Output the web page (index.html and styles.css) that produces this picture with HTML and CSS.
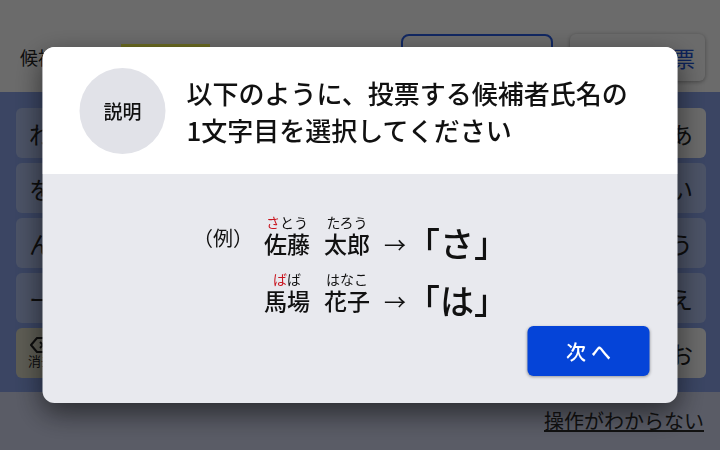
FILE: index.html
```html
<!DOCTYPE html>
<html lang="ja">

<head>
    <meta charset="UTF-8">
    <meta name="viewport" content="width=device-width, initial-scale=1.0">
    <title>候補者選択</title>
    <link rel="stylesheet" href="styles.css">
</head>

<body>

    <div class="app">
        <!-- 上部バー -->
        <header class="topbar">
            <span class="topbar-label">候補者</span>
            <div class="name-box"></div>
            <div class="search-box"></div>
            <button class="blank-btn">白票</button>
        </header>

        <!-- 50音キーボード -->
        <div class="keyboard">
            <button class="key">わ</button>
            <button class="key">を</button>
            <button class="key">ん</button>
            <button class="key">ー</button>
            <button class="key key-delete">
                <svg width="22" height="16" viewBox="0 0 22 16">
                    <path d="M7 1h13v14H7L1 8z" fill="none" stroke="#222" stroke-width="2" stroke-linejoin="round"/>
                    <path d="M10 5l6 6M16 5l-6 6" stroke="#222" stroke-width="2"/>
                </svg>
                <span>消去</span>
            </button>

            <button class="key">ら</button>
            <button class="key">り</button>
            <button class="key">る</button>
            <button class="key">れ</button>
            <button class="key">ろ</button>

            <button class="key">や</button>
            <button class="key">（</button>
            <button class="key">ゆ</button>
            <button class="key">）</button>
            <button class="key">よ</button>

            <button class="key">ま</button>
            <button class="key">み</button>
            <button class="key">む</button>
            <button class="key">め</button>
            <button class="key">も</button>

            <button class="key">は</button>
            <button class="key">ひ</button>
            <button class="key">ふ</button>
            <button class="key">へ</button>
            <button class="key">ほ</button>

            <button class="key">な</button>
            <button class="key">に</button>
            <button class="key">ぬ</button>
            <button class="key">ね</button>
            <button class="key">の</button>

            <button class="key">た</button>
            <button class="key">ち</button>
            <button class="key">つ</button>
            <button class="key">て</button>
            <button class="key">と</button>

            <button class="key">さ</button>
            <button class="key">し</button>
            <button class="key">す</button>
            <button class="key">せ</button>
            <button class="key">そ</button>

            <button class="key">か</button>
            <button class="key">き</button>
            <button class="key">く</button>
            <button class="key">け</button>
            <button class="key">こ</button>

            <button class="key key-on">あ</button>
            <button class="key">い</button>
            <button class="key">う</button>
            <button class="key">え</button>
            <button class="key key-on">お</button>
        </div>

        <footer class="help">
            <a href="#" class="help-link">操作がわからない</a>
        </footer>
    </div>

    <!-- 説明ダイアログ -->
    <div class="overlay"></div>
    <div class="modal">
        <div class="modal-head">
            <div class="badge">説明</div>
            <h2 class="modal-title">以下のように、投票する候補者氏名の<br>1文字目を選択してください</h2>
        </div>

        <div class="modal-body">
            <div class="example">
                <span class="example-label">（例）</span>
                <span class="name"><span class="kana"><em>さ</em>とう</span><span class="kanji">佐藤</span></span>
                <span class="name"><span class="kana">たろう</span><span class="kanji">太郎</span></span>
                <span class="arrow">→</span>
                <span class="result">「さ」</span>

                <span></span>
                <span class="name"><span class="kana"><em>ば</em>ば</span><span class="kanji">馬場</span></span>
                <span class="name"><span class="kana">はなこ</span><span class="kanji">花子</span></span>
                <span class="arrow">→</span>
                <span class="result">「は」</span>
            </div>

            <div class="modal-actions">
                <button class="next-btn">次へ</button>
            </div>
        </div>
    </div>

</body>

</html>
```

FILE: styles.css
```css
body {
    font-family: 'Noto Sans CJK JP', 'Noto Sans', sans-serif;
    margin: 0;
    padding: 0;
    background-color: #fff;
    color: #222;
    width: 720px;
    height: 450px;
    overflow: hidden;
}

button {
    font-family: inherit;
}

.app {
    display: flex;
    flex-direction: column;
    height: 450px;
}

/* 上部バー */
.topbar {
    height: 92px;
    box-sizing: border-box;
    padding: 22px 15px 0 20px;
    display: flex;
    align-items: center;
    background-color: #fff;
}

.topbar-label {
    font-size: 18px;
    color: #222;
}

.name-box {
    width: 89px;
    height: 26px;
    margin-left: 47px;
    background-color: #ffff50;
}

.search-box {
    width: 152px;
    height: 47px;
    box-sizing: border-box;
    margin-left: auto;
    border: 2px solid #2a5fe8;
    border-radius: 8px;
    background-color: #fff;
}

.blank-btn {
    width: 135px;
    height: 47px;
    margin-left: 17px;
    padding: 0 10px 0 0;
    border: none;
    border-radius: 6px;
    background-color: #fff;
    box-shadow: 0 1px 4px rgba(0, 0, 0, 0.35);
    color: #1f55d8;
    font-size: 22px;
    text-align: right;
}

/* キーボード */
.keyboard {
    height: 300px;
    box-sizing: border-box;
    padding: 16px 14px 0 16px;
    background-color: #8ca5ec;
    display: grid;
    grid-auto-flow: column;
    grid-template-rows: repeat(5, 50px);
    grid-template-columns: repeat(10, 50px);
    row-gap: 5px;
    justify-content: space-between;
}

.key {
    border: none;
    border-radius: 6px;
    background-color: #b4c5f2;
    color: #222;
    font-size: 24px;
    padding: 0;
}

.key-on {
    background-color: #fdfdfd;
}

.key-delete {
    background-color: #dedcc8;
    display: flex;
    flex-direction: column;
    align-items: center;
    justify-content: center;
    font-size: 13px;
    line-height: 1.2;
}

.help {
    flex: 1;
    background-color: #d6dbf3;
    display: flex;
    justify-content: flex-end;
    padding: 17px 16px 0 0;
}

.help-link {
    color: #2a2a2a;
    font-size: 20px;
    line-height: 24px;
    height: 24px;
}

/* オーバーレイ */
.overlay {
    position: fixed;
    top: 0;
    left: 0;
    width: 100%;
    height: 100%;
    background-color: rgba(0, 0, 0, 0.58);
    z-index: 999;
}

/* ダイアログ */
.modal {
    position: fixed;
    top: 50%;
    left: 50%;
    transform: translate(-50%, -50%);
    width: 635px;
    border-radius: 12px;
    overflow: hidden;
    background-color: #e8e9ee;
    box-shadow: 0 10px 28px rgba(0, 0, 0, 0.55);
    z-index: 1000;
}

.modal-head {
    height: 127px;
    box-sizing: border-box;
    padding: 0 20px 0 37px;
    display: flex;
    align-items: center;
    gap: 21px;
    background-color: #fff;
}

.badge {
    width: 86px;
    height: 86px;
    flex-shrink: 0;
    border-radius: 50%;
    background-color: #e1e2e8;
    display: flex;
    align-items: center;
    justify-content: center;
    font-size: 19px;
    font-weight: 500;
    color: #111;
}

.modal-title {
    margin: 0;
    font-size: 26px;
    line-height: 37px;
    font-weight: 500;
    color: #111;
}

.modal-body {
    padding: 41px 28px 27px;
}

.example {
    display: grid;
    grid-template-columns: auto auto auto auto auto;
    column-gap: 14px;
    row-gap: 15px;
    align-items: end;
    justify-content: center;
    padding-right: 19px;
}

.example-label {
    font-size: 20px;
    line-height: 24px;
    margin-bottom: 7px;
    margin-right: -3px;
    color: #111;
}

.name {
    display: flex;
    flex-direction: column;
    align-items: center;
}

.kana {
    font-size: 14px;
    line-height: 14px;
    color: #111;
}

.kana em {
    font-style: normal;
    color: #c8141e;
}

.kanji {
    font-size: 23px;
    line-height: 28px;
    font-weight: 500;
    color: #111;
}

.arrow {
    font-size: 22px;
    line-height: 28px;
    color: #111;
}

.result {
    margin-left: -14px;
    font-size: 34px;
    line-height: 28px;
    font-weight: 500;
    color: #111;
}

.modal-actions {
    margin-top: 12px;
    display: flex;
    justify-content: flex-end;
}

.next-btn {
    width: 122px;
    height: 50px;
    border: none;
    border-radius: 6px;
    background-color: #0544d8;
    box-shadow: 0 1px 3px rgba(0, 0, 0, 0.35);
    color: #fff;
    font-size: 20px;
    font-weight: 500;
    letter-spacing: 5px;
    padding: 0 0 0 5px;
}
```
